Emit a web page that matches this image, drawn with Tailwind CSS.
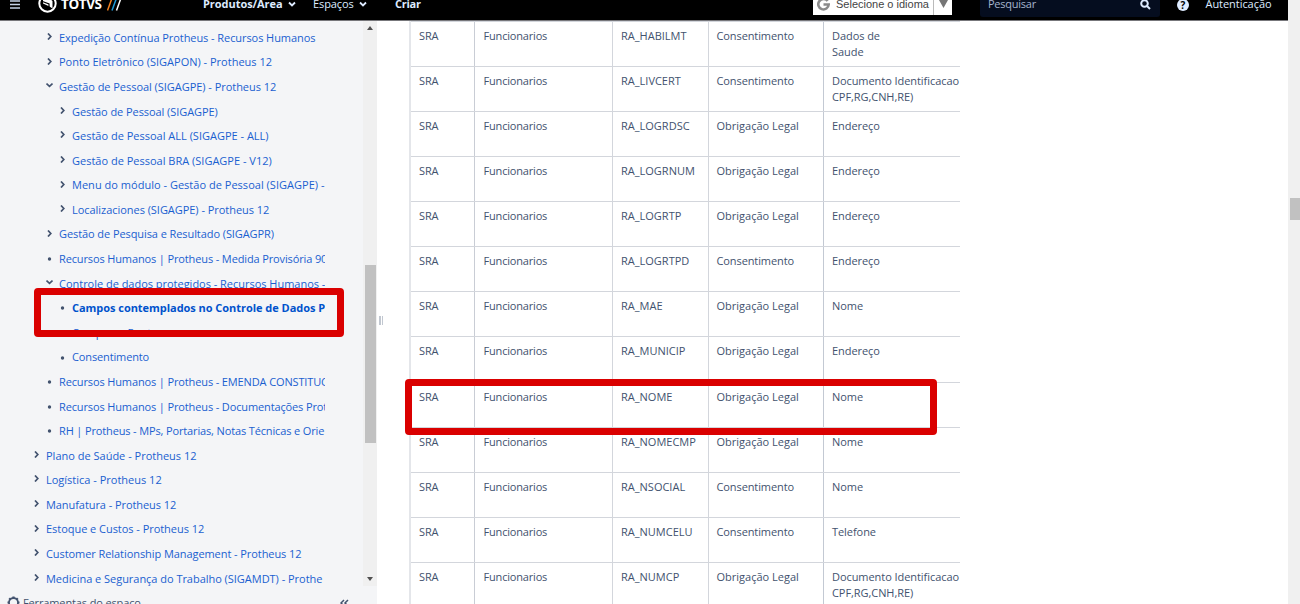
<!DOCTYPE html>
<html lang="pt-BR">
<head>
<meta charset="utf-8">
<title>Campos contemplados no Controle de Dados Protegidos</title>
<script src="https://cdn.jsdelivr.net/npm/@tailwindcss/browser@4"></script>
</head>
<body class="relative flex h-[604px] w-[1300px] overflow-hidden bg-white font-['Open_Sans','Noto_Sans',sans-serif] text-[11px]">
<div class="flex w-[1288px] flex-none flex-col">
  <header class="h-[21px] flex-none overflow-hidden border-b border-[#77777b] bg-black text-[#deebff]">
    <div class="-mt-[12px] flex h-[33px] items-center whitespace-nowrap">
      <div class="w-[38px] flex-none pl-[10px]"><svg class="h-[10px] w-[10px]" viewBox="0 0 10 10" stroke="#c5d2e6" stroke-width="1.3"><path d="M0 1H10M0 4.500H10M0 8H10"/></svg></div>
      <div class="flex w-[165px] flex-none items-center">
        <svg class="-mt-[2px] h-[19px] w-[19px] flex-none" viewBox="0 0 19 19"><circle cx="9.500" cy="9.500" r="8.200" fill="none" stroke="#fff" stroke-width="2"/><path d="M5 4.500H11.500L14.500 7V14.500L11.500 12.500L5 9.500Z" fill="#fff"/><path d="M4.500 7.500L11 10V13.500" fill="none" stroke="#000" stroke-width="1.200"/></svg>
        <span class="ml-[4px] w-[46px] font-['Open_Sans',sans-serif] text-[13.500px] font-bold leading-none tracking-[-0.4px] text-white">TOTVS</span>
        <svg class="h-[12px] w-[16px] flex-none" viewBox="0 0 16 12" stroke-width="1.500"><path d="M.5 11.500L4.500 .5" stroke="#f58220"/><path d="M5 11.500L9 .5" stroke="#1e9bd7"/><path d="M9.500 11.500L13.500 .5" stroke="#fff"/></svg>
      </div>
      <span class="w-[85px] flex-none font-bold tracking-[-0.05px]">Produtos/Área</span>
      <svg class="mr-[17px] -mt-[1px] h-[8px] w-[8px] flex-none" viewBox="0 0 8 8" fill="none" stroke="#deebff" stroke-width="1.800"><path d="M1 2.500L4 5.500L7 2.500"/></svg>
      <span class="w-[46px] flex-none tracking-[-0.1px]">Espaços</span>
      <svg class="mr-[28px] -mt-[1px] h-[8px] w-[8px] flex-none" viewBox="0 0 8 8" fill="none" stroke="#deebff" stroke-width="1.800"><path d="M1 2.500L4 5.500L7 2.500"/></svg>
      <span class="w-[418px] flex-none font-bold tracking-[-0.25px]">Criar</span>
      <div class="mr-[28px] flex h-[20px] w-[139px] flex-none items-center bg-white text-[#444]">
        <svg class="ml-[4px] h-[13px] w-[13px] flex-none" viewBox="0 0 13 13" fill="none" stroke="#8b8b8b" stroke-width="2.600"><path d="M10.600 3A5.200 5.200 0 1 0 11.700 6.500H6.500"/></svg>
        <span class="ml-[6px] w-[97px] flex-none font-['Liberation_Sans',sans-serif] text-[11px]">Selecione o idioma</span>
        <span class="h-full w-px bg-[#bbb]"></span>
        <svg class="ml-[5px] -mt-[2px] h-[8px] w-[9px] flex-none" viewBox="0 0 9 8" fill="#767676"><path d="M0 0H9L4.500 8Z"/></svg>
      </div>
      <div class="mr-[17px] flex h-[24px] w-[180px] flex-none items-center rounded-[3px] bg-[#050d1f] pl-[8px] text-[#a5b4cd]">
        <span class="w-[152px] tracking-[-0.25px]">Pesquisar</span>
        <svg class="h-[11px] w-[11px]" viewBox="0 0 11 11" fill="none" stroke="#deebff" stroke-width="2"><circle cx="4.500" cy="4.500" r="3.300"/><path d="M7 7L10 10"/></svg>
      </div>
      <span class="mr-[16.500px] flex h-[12px] w-[12px] flex-none items-center justify-center rounded-full bg-[#deebff] text-[10px] font-bold leading-none text-black">?</span>
      <span class="tracking-[-0.05px]">Autenticação</span>
    </div>
  </header>
  <div class="flex min-h-0 flex-1">
    <aside class="flex w-[377px] flex-none flex-col bg-[#f4f5f7]">
      <div class="flex h-[565px] flex-none">
        <nav id="tree" class="w-[325px] flex-none overflow-hidden pt-[4.800px] text-[#1a5fd0]"></nav>
        <div class="ml-[38px] flex w-[14px] flex-none flex-col items-center bg-[#f0f0f0]">
          <svg class="mt-[5px] h-[4px] w-[6px] flex-none" viewBox="0 0 6 4" fill="#505050"><path d="M3 0L6 4H0Z"/></svg>
          <span class="mt-[235px] h-[178px] w-[11px] flex-none bg-[#c1c1c1]"></span>
          <svg class="mt-[134px] h-[4px] w-[6px] flex-none" viewBox="0 0 6 4" fill="#505050"><path d="M3 4L6 0H0Z"/></svg>
        </div>
      </div>
      <div class="flex h-[34px] flex-none items-center pl-[7px] text-[#42526e]">
        <svg class="-mt-[1px] h-[13px] w-[13px] flex-none" viewBox="0 0 13 13" fill="none" stroke="#42526e"><circle cx="6.500" cy="6.500" r="4.500" stroke-width="1.800"/><path d="M6.500 .5V2M6.500 11V12.500M.5 6.500H2M11 6.500H12.500M2.200 2.200L3.300 3.300M9.700 9.700L10.800 10.800M2.200 10.800L3.300 9.700M9.700 3.300L10.800 2.200" stroke-width="2.200"/></svg>
        <span class="ml-[3px] w-[317px] tracking-[-0.13px]">Ferramentas do espaço</span>
        <svg class="h-[8px] w-[9px]" viewBox="0 0 9 8" fill="none" stroke="#42526e" stroke-width="1.500"><path d="M4 1L1 4L4 7M8 1L5 4L8 7"/></svg>
      </div>
    </aside>
    <div class="flex w-[32px] flex-none items-start gap-[1px] pl-[2px] pt-[295px]">
      <span class="h-[9px] w-[1.500px] bg-[#c1c7d0]"></span><span class="h-[9px] w-[1.500px] bg-[#c1c7d0]"></span>
    </div>
    <main class="h-full w-[551px] overflow-hidden border-l-2 border-[#e4e6ea] text-[#42526e]">
      <div id="grid" class="w-[700px] border-t border-[#d3d6dc]"></div>
    </main>
  </div>
</div>
<div class="w-[12px] flex-none bg-[#f0f0f0] pl-[2px] pt-[198px]"><div class="h-[22px] bg-[#c1c1c1]"></div></div>

<div class="absolute left-[34px] top-[288px] h-[49px] w-[310px] rounded-[4px] border-[7px] border-[#da0000]"></div>
<div class="absolute left-[405px] top-[379px] h-[56px] w-[532px] rounded-[4px] border-[7px] border-[#da0000]"></div>

<script>
const N = 'tracking-[-0.07px]', P = 'tracking-[-0.13px]', Z = '';
const tree = [
  [1, '>', 'Expedição Contínua Protheus - Recursos Humanos', N],
  [1, '>', 'Ponto Eletrônico (SIGAPON) - Protheus 12', Z],
  [1, 'v', 'Gestão de Pessoal (SIGAGPE) - Protheus 12', 'tracking-[-0.04px]'],
  [2, '>', 'Gestão de Pessoal (SIGAGPE)', N],
  [2, '>', 'Gestão de Pessoal ALL (SIGAGPE - ALL)', Z],
  [2, '>', 'Gestão de Pessoal BRA (SIGAGPE - V12)', Z],
  [2, '>', 'Menu do módulo - Gestão de Pessoal (SIGAGPE) -', 'tracking-[0.02px]'],
  [2, '>', 'Localizaciones (SIGAGPE) - Protheus 12', 'tracking-[-0.04px]'],
  [1, '>', 'Gestão de Pesquisa e Resultado (SIGAGPR)', 'tracking-[-0.08px]'],
  [1, '.', 'Recursos Humanos | Protheus - Medida Provisória 905', P],
  [1, 'v', 'Controle de dados protegidos - Recursos Humanos -', 'tracking-[-0.02px]'],
  [2, '.', 'Campos contemplados no Controle de Dados Protegidos', 'font-bold text-[#0052cc] tracking-[-0.04px]'],
  [2, '.', 'Campos e Fontes', 'tracking-[0.2px]'],
  [2, '.', 'Consentimento', P],
  [1, '.', 'Recursos Humanos | Protheus - EMENDA CONSTITUCIONAL', P],
  [1, '.', 'Recursos Humanos | Protheus - Documentações Protheus', P],
  [1, '.', 'RH | Protheus - MPs, Portarias, Notas Técnicas e Orie', 'tracking-[-0.14px]'],
  [0, '>', 'Plano de Saúde - Protheus 12', Z],
  [0, '>', 'Logística - Protheus 12', Z],
  [0, '>', 'Manufatura - Protheus 12', N],
  [0, '>', 'Estoque e Custos - Protheus 12', 'tracking-[-0.04px]'],
  [0, '>', 'Customer Relationship Management - Protheus 12', N],
  [0, '>', 'Medicina e Segurança do Trabalho (SIGAMDT) - Prothe', 'tracking-[-0.03px]'],
];
const indent = ['pl-[33px]', 'pl-[46px]', 'pl-[59px]'];
const mark = {
  '>': '<path d="M2 .5L4.800 3.500L2 6.500" fill="none" stroke="#42526e" stroke-width="1.700"/>',
  'v': '<path d="M.5 1.500L3.500 4.400L6.500 1.500" fill="none" stroke="#42526e" stroke-width="1.700"/>',
  '.': '<circle cx="3.500" cy="5" r="1.700" fill="#42526e"/>',
};
document.getElementById('tree').innerHTML = tree.map(([d, m, t, c]) =>
  `<div class="flex h-[24.580px] items-center whitespace-nowrap ${indent[d]}"><svg class="mr-[6px] -mt-[3px] h-[7px] w-[7px] flex-none" viewBox="0 0 7 7">${mark[m]}</svg><span class="${c}">${t}</span></div>`).join('');

const L = 'Obrigação Legal', C = 'Consentimento', D = 'Documento Identificacao<br>CPF,RG,CNH,RE)';
const rows = [
  ['RA_HABILMT', C, 'Dados de<br>Saude'], ['RA_LIVCERT', C, D], ['RA_LOGRDSC', L, 'Endereço'],
  ['RA_LOGRNUM', L, 'Endereço'], ['RA_LOGRTP', L, 'Endereço'], ['RA_LOGRTPD', C, 'Endereço'],
  ['RA_MAE', L, 'Nome'], ['RA_MUNICIP', L, 'Endereço'], ['RA_NOME', L, 'Nome'],
  ['RA_NOMECMP', L, 'Nome'], ['RA_NSOCIAL', C, 'Nome'], ['RA_NUMCELU', C, 'Telefone'], ['RA_NUMCP', L, D],
];
document.getElementById('grid').innerHTML = rows.map(([a, b, c]) => `<div class="flex h-[45.070px] border-b border-[#d3d6dc] leading-[16px] whitespace-nowrap">
  <div class="w-[64px] flex-none border-r border-[#c9cdd5] pl-[8px] pt-[6px] tracking-[-0.1px]">SRA</div>
  <div class="w-[138px] flex-none border-r border-[#d3d6dc] pl-[8.500px] pt-[6px] tracking-[-0.18px]">Funcionarios</div>
  <div class="w-[96px] flex-none border-r border-[#d3d6dc] pl-[8px] pt-[6px]">${a}</div>
  <div class="w-[115px] flex-none border-r border-[#c3c9d3] pl-[7.500px] pt-[6px] ${b === C ? 'tracking-[-0.1px]' : ''}">${b}</div>
  <div class="pl-[8px] pt-[6px] tracking-[-0.06px]">${c}</div></div>`).join('');
</script>
</body>
</html>
